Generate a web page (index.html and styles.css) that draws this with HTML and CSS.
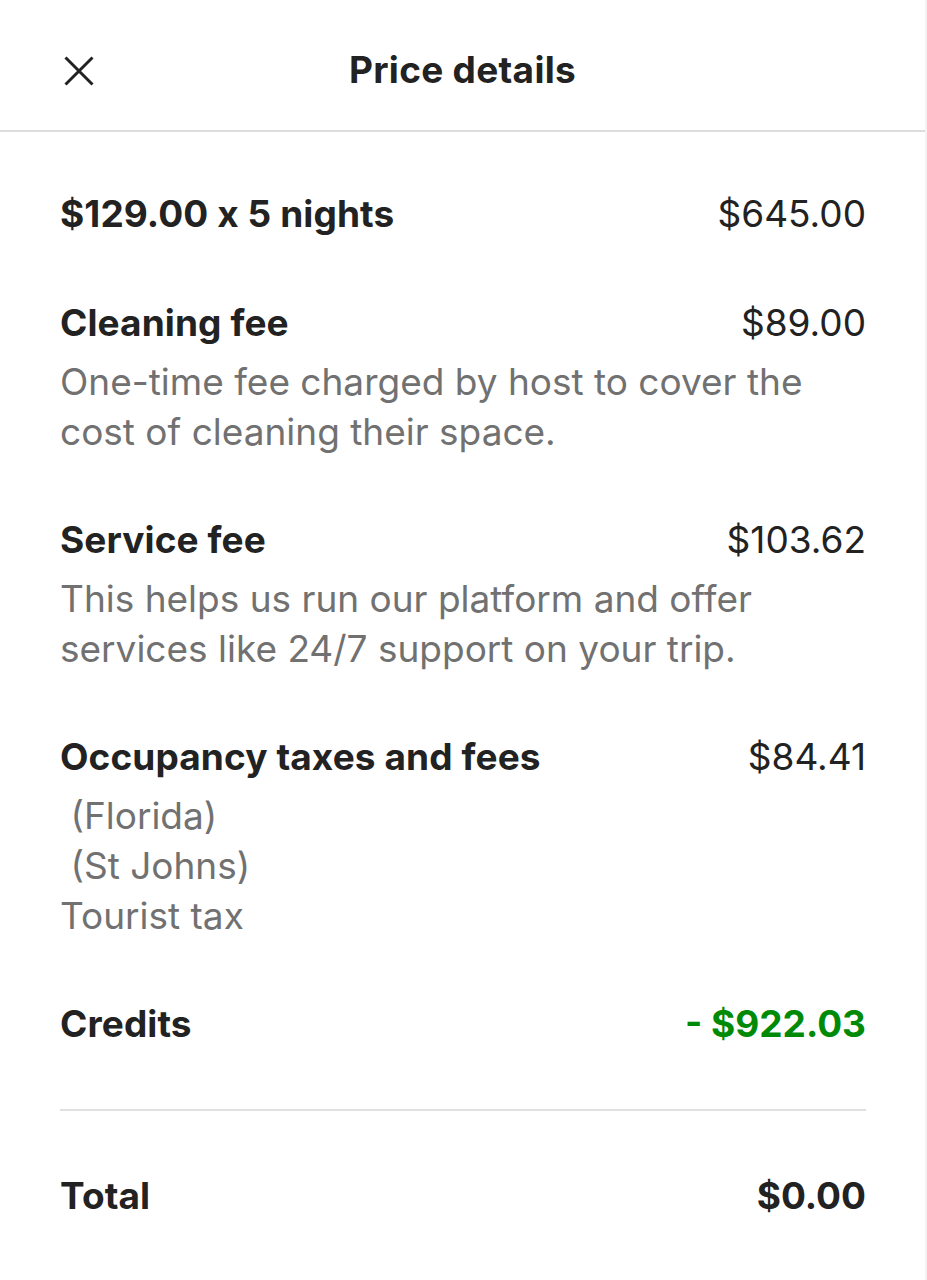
FILE: index.html
```html
<!DOCTYPE html>
<html lang="en">
<head>
<meta charset="utf-8">
<title>Price details</title>
<link rel="stylesheet" href="styles.css">
</head>
<body>
<div class="page">
  <header class="header">
    <button class="close" aria-label="Close">
      <svg width="30" height="30" viewBox="0 0 30 30"><path d="M1.5 1.5 L28.5 28.5 M28.5 1.5 L1.5 28.5" stroke="#222" stroke-width="3" fill="none"/></svg>
    </button>
    <h1 class="title">Price details</h1>
  </header>
  <main class="content">
    <div class="row first">
      <div class="line"><span class="label">$129.00 x 5 nights</span><span class="amount">$645.00</span></div>
    </div>
    <div class="row">
      <div class="line"><span class="label">Cleaning fee</span><span class="amount">$89.00</span></div>
      <p class="desc">One-time fee charged by host to cover the cost of cleaning their space.</p>
    </div>
    <div class="row">
      <div class="line"><span class="label">Service fee</span><span class="amount">$103.62</span></div>
      <p class="desc">This helps us run our platform and offer services like 24/7 support on your trip.</p>
    </div>
    <div class="row">
      <div class="line"><span class="label">Occupancy taxes and fees</span><span class="amount">$84.41</span></div>
      <p class="desc pre"> (Florida)
 (St Johns)
Tourist tax</p>
    </div>
    <div class="row">
      <div class="line"><span class="label">Credits</span><span class="amount credit">- $922.03</span></div>
    </div>
    <hr class="divider">
    <div class="row">
      <div class="line"><span class="label">Total</span><span class="amount total">$0.00</span></div>
    </div>
  </main>
</div>
</body>
</html>
```

FILE: styles.css
```css
* { box-sizing: border-box; }
html, body { margin: 0; padding: 0; background: #fff; }
body {
  font-family: Inter, "Noto Sans", "Liberation Sans", sans-serif;
  color: #222;
}
.page {
  width: 927px;
  min-height: 1280px;
  border-right: 2px solid #f3f3f3;
}
.header {
  height: 132px;
  border-bottom: 2px solid #dddddd;
  display: flex;
  align-items: center;
  justify-content: center;
  position: relative;
}
.close {
  position: absolute;
  left: 64px;
  top: 56px;
  width: 30px;
  height: 30px;
  padding: 0;
  border: 0;
  background: none;
  display: block;
}
.close svg { display: block; width: 30px; height: 30px; }
.title {
  margin: 0;
  font-size: 37px;
  font-weight: 700;
  letter-spacing: 0.3px;
  line-height: 40px;
  padding-top: 10px;
}
.content {
  padding: 62px 59px 0 60px;
  display: flex;
  flex-direction: column;
  gap: 63px;
}
.row.first { margin-bottom: 6px; }
.line {
  display: flex;
  justify-content: space-between;
  align-items: baseline;
  font-size: 37px;
  line-height: 40px;
}
.label { font-weight: 700; letter-spacing: 0.1px; }
.amount { font-weight: 400; letter-spacing: 0; }
.credit { color: #008a05; font-weight: 700; }
.total { font-weight: 700; }
.desc {
  margin: 14px 0 0;
  font-size: 37px;
  line-height: 50px;
  color: #717171;
  letter-spacing: 0;
}
.pre { white-space: pre; }
.divider {
  margin: 2px 0;
  border: 0;
  height: 2px;
  background: #e0e0e0;
}
```
